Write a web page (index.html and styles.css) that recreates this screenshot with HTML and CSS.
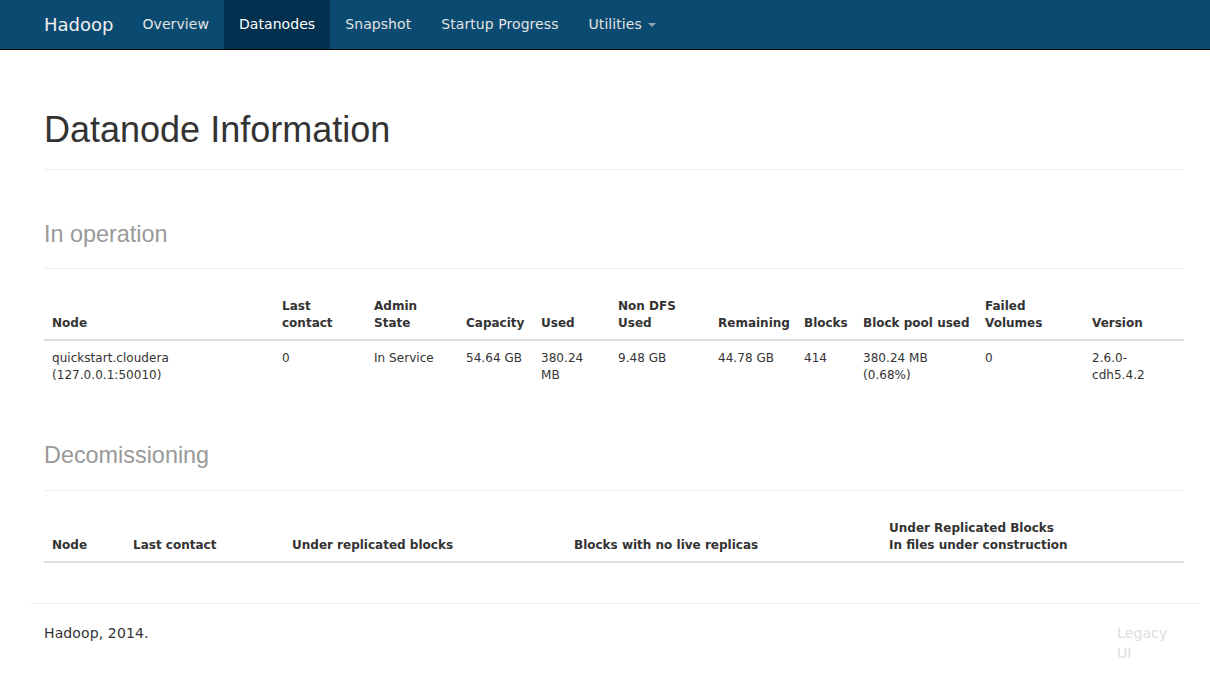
FILE: index.html
```html
<!DOCTYPE html>
<html>
<head>
<meta charset="utf-8">
<title>Datanode Information</title>
<link rel="stylesheet" href="styles.css">
</head>
<body>
<header class="navbar">
  <div class="container nav-inner">
    <a class="brand" href="#">Hadoop</a>
    <ul class="nav">
      <li><a href="#">Overview</a></li>
      <li class="active"><a href="#">Datanodes</a></li>
      <li><a href="#">Snapshot</a></li>
      <li><a href="#">Startup Progress</a></li>
      <li><a href="#">Utilities <span class="caret"></span></a></li>
    </ul>
  </div>
</header>
<main class="container content">
  <div class="page-header"><h1>Datanode Information</h1></div>
  <div class="page-header"><h1><small>In operation</small></h1></div>
  <table class="table live">
    <thead>
      <tr>
        <th>Node</th>
        <th>Last<br>contact</th>
        <th>Admin<br>State</th>
        <th>Capacity</th>
        <th>Used</th>
        <th>Non DFS<br>Used</th>
        <th>Remaining</th>
        <th>Blocks</th>
        <th>Block pool used</th>
        <th>Failed<br>Volumes</th>
        <th>Version</th>
      </tr>
    </thead>
    <tbody>
      <tr>
        <td>quickstart.cloudera<br>(127.0.0.1:50010)</td>
        <td>0</td>
        <td>In Service</td>
        <td>54.64 GB</td>
        <td>380.24<br>MB</td>
        <td>9.48 GB</td>
        <td>44.78 GB</td>
        <td>414</td>
        <td>380.24 MB<br>(0.68%)</td>
        <td>0</td>
        <td>2.6.0-<br>cdh5.4.2</td>
      </tr>
    </tbody>
  </table>
  <div class="page-header"><h1><small>Decomissioning</small></h1></div>
  <table class="table decom">
    <thead>
      <tr>
        <th>Node</th>
        <th>Last contact</th>
        <th>Under replicated blocks</th>
        <th>Blocks with no live replicas</th>
        <th>Under Replicated Blocks<br>In files under construction</th>
      </tr>
    </thead>
    <tbody></tbody>
  </table>
</main>
<footer class="container footer">
  <hr class="rule">
  <div class="footer-row">
    <p class="copy">Hadoop, 2014.</p>
    <p class="legacy"><a href="#">Legacy UI</a></p>
  </div>
</footer>
</body>
</html>
```
FILE: styles.css
```css
* { box-sizing: border-box; }
html, body { margin: 0; padding: 0; }
body {
  font-family: "DejaVu Sans", sans-serif;
  font-size: 14px;
  line-height: 1.42857;
  letter-spacing: 0.12px;
  color: #333;
  background: #fff;
}
a { text-decoration: none; }

.container {
  width: 1170px;
  margin-left: 29px;
  padding: 0 15px;
}

.navbar {
  height: 50px;
  background: #0b4b71;
  border-bottom: 1px solid #050505;
}
.nav-inner {
  display: flex;
  align-items: stretch;
  height: 49px;
}
.brand {
  margin-left: -15px;
  padding: 0 14px 0 15px;
  font-size: 18px;
  line-height: 49px;
  letter-spacing: 0;
  color: #f0f0f0;
}
.nav {
  display: flex;
  list-style: none;
  margin: 0;
  padding: 0;
}
.nav li a {
  display: block;
  padding: 0 15px;
  line-height: 49px;
  letter-spacing: 0.07px;
  color: #e2e2e2;
}
.nav li.active a {
  background: #03304f;
  color: #fff;
}
.caret {
  display: inline-block;
  width: 0;
  height: 0;
  margin-left: 2px;
  vertical-align: middle;
  border-top: 4px solid #8fa3b3;
  border-left: 4px solid transparent;
  border-right: 4px solid transparent;
}

.content { padding-top: 60px; }

.page-header {
  margin: 0 0 40px;
  padding-bottom: 9px;
  border-bottom: 1px solid #eee;
}
.page-header h1 {
  margin: 0 0 10px;
  font-family: "Liberation Sans", Arial, sans-serif;
  font-weight: 500;
  font-size: 36px;
  line-height: 1.1;
  letter-spacing: 0;
  color: #333;
}
.page-header h1 small {
  font-size: 65%;
  font-weight: normal;
  color: #999;
}
.content > .table { margin-top: -20px; }

.table {
  width: 100%;
  border-collapse: collapse;
  border-spacing: 0;
  table-layout: fixed;
  font-size: 12px;
  line-height: 17px;
  letter-spacing: 0.04px;
  margin-bottom: 40px;
}
.table.decom { margin-bottom: 20px; }
.table th, .table td {
  padding: 9px 8px 7px;
  text-align: left;
  vertical-align: top;
  color: #333;
}
.table th {
  vertical-align: bottom;
  font-weight: bold;
  white-space: nowrap;
  letter-spacing: 0;
  border-bottom: 2px solid #ddd;
}
.table td { border-top: 1px solid #ddd; }
.table tbody tr:first-child td { border-top: 0; }

.live th:nth-child(1) { width: 230px; }
.live th:nth-child(2) { width: 92px; }
.live th:nth-child(3) { width: 92px; }
.live th:nth-child(4) { width: 75px; }
.live th:nth-child(5) { width: 77px; }
.live th:nth-child(6) { width: 100px; }
.live th:nth-child(7) { width: 86px; }
.live th:nth-child(8) { width: 59px; }
.live th:nth-child(9) { width: 122px; }
.live th:nth-child(10) { width: 107px; }
.live th:nth-child(11) { width: 100px; }

.decom th:nth-child(1) { width: 81px; }
.decom th:nth-child(2) { width: 159px; }
.decom th:nth-child(3) { width: 282px; }
.decom th:nth-child(4) { width: 315px; }
.decom th:nth-child(5) { width: 303px; }

.footer {
  display: flow-root;
  padding: 0;
  margin-left: 30px;
}
.rule {
  margin: 20px 0;
  border: 0;
  border-top: 1px solid #eee;
  height: 0;
}
.footer-row {
  display: flex;
  justify-content: space-between;
}
.footer-row p { margin: 0 0 10px; }
.copy { padding-left: 14px; }
.legacy {
  width: 98px;
  padding: 0 15px;
}
.legacy a { color: #ddd; }
```
